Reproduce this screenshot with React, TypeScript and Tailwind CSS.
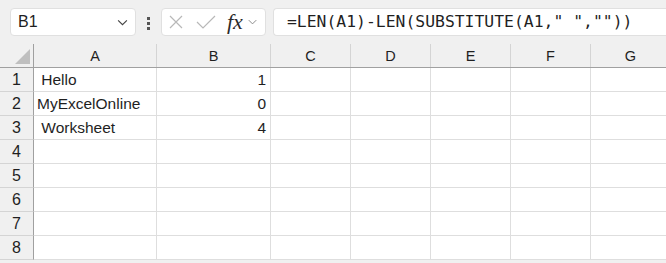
import React from "react";

const cols = [
  { name: "A", w: "w-[123px]" },
  { name: "B", w: "w-[114px]" },
  { name: "C", w: "w-[80px]" },
  { name: "D", w: "w-[80px]" },
  { name: "E", w: "w-[80px]" },
  { name: "F", w: "w-[80px]" },
  { name: "G", w: "w-[80px]" },
];

const rows: { a: string; b: string }[] = [
  { a: " Hello", b: "1" },
  { a: "MyExcelOnline", b: "0" },
  { a: " Worksheet", b: "4" },
  { a: "", b: "" },
  { a: "", b: "" },
  { a: "", b: "" },
  { a: "", b: "" },
  { a: "", b: "" },
];

const Chevron = ({ className }: { className?: string }) => (
  <svg viewBox="0 0 12 8" className={className} fill="none" stroke="currentColor" strokeWidth="1.3">
    <path d="M1 1.5 L6 6.5 L11 1.5" />
  </svg>
);

export default function App() {
  return (
    <div className="w-[666px] h-[263px] overflow-hidden bg-[#f0f0f0] font-['Liberation_Sans',Arial,sans-serif] text-[#1f1f1f]">
      {/* toolbar */}
      <div className="flex h-[44px] items-start pt-[8px]">
        <div className="ml-[10px] flex h-[28px] w-[126px] items-center justify-between rounded-[4px] border border-[#e0e0e0] bg-white pl-[7px] pr-[7px]">
          <span className="text-[16px]">B1</span>
          <Chevron className="h-[7px] w-[11px] text-[#444]" />
        </div>
        <div className="ml-[11px] mt-[9px] flex flex-col gap-[2px]">
          <span className="block h-[3px] w-[3px] bg-[#555]" />
          <span className="block h-[3px] w-[3px] bg-[#555]" />
          <span className="block h-[3px] w-[3px] bg-[#555]" />
        </div>
        <div className="ml-[11px] flex h-[28px] w-[105px] items-center rounded-[4px] border border-[#e0e0e0] bg-white pl-[7px]">
          <svg viewBox="0 0 14 14" className="h-[14px] w-[14px] text-[#b8b8b8]" fill="none" stroke="currentColor" strokeWidth="1.2">
            <path d="M1 1 L13 13 M13 1 L1 13" />
          </svg>
          <svg viewBox="0 0 20 14" className="ml-[13px] h-[14px] w-[20px] text-[#b8b8b8]" fill="none" stroke="currentColor" strokeWidth="1.2">
            <path d="M1 7 L7 13 L19 1" />
          </svg>
          <span className="ml-[11px] font-['Liberation_Serif',serif] text-[22px] italic leading-none text-[#2b2b2b]">fx</span>
          <Chevron className="ml-[5px] h-[6px] w-[9px] text-[#888]" />
        </div>
        <div className="ml-[7px] flex h-[28px] flex-1 items-center rounded-l-[4px] border border-r-0 border-[#e0e0e0] bg-white pl-[13px]">
          <span className="whitespace-pre font-['DejaVu_Sans_Mono',monospace] text-[16.4px] text-[#1f1f1f]">
            {'=LEN(A1)-LEN(SUBSTITUTE(A1," ",""))'}
          </span>
        </div>
      </div>

      {/* grid */}
      <div className="flex flex-col">
        <div className="flex h-[24px] border-b border-[#a0a0a0]">
          <div className="relative w-[34px] shrink-0 border-r border-[#a0a0a0]">
            <svg viewBox="0 0 15 15" className="absolute bottom-[3px] right-[3px] h-[15px] w-[15px]">
              <path d="M15 0 L15 15 L0 15 Z" fill="#bfbfbf" />
            </svg>
          </div>
          {cols.map((c) => (
            <div
              key={c.name}
              className={`${c.w} flex shrink-0 items-center justify-center border-r border-[#d4d4d4] pt-[2px] text-[14.5px]`}
            >
              {c.name}
            </div>
          ))}
        </div>
        {rows.map((r, i) => (
          <div key={i} className="flex h-[24px]">
            <div className="flex w-[34px] shrink-0 items-center justify-center border-b border-r border-b-[#d4d4d4] border-r-[#a0a0a0] pt-[1px] text-[16px]">
              {i + 1}
            </div>
            {cols.map((c, j) => (
              <div
                key={c.name}
                className={`${c.w} flex shrink-0 items-center overflow-visible whitespace-pre border-b border-r border-[#dedede] bg-white pt-[1px] text-[15.5px] ${
                  j === 1 ? "justify-end pr-[4px]" : "pl-[3px]"
                }`}
              >
                {j === 0 ? r.a : j === 1 ? r.b : ""}
              </div>
            ))}
          </div>
        ))}
      </div>
    </div>
  );
}
